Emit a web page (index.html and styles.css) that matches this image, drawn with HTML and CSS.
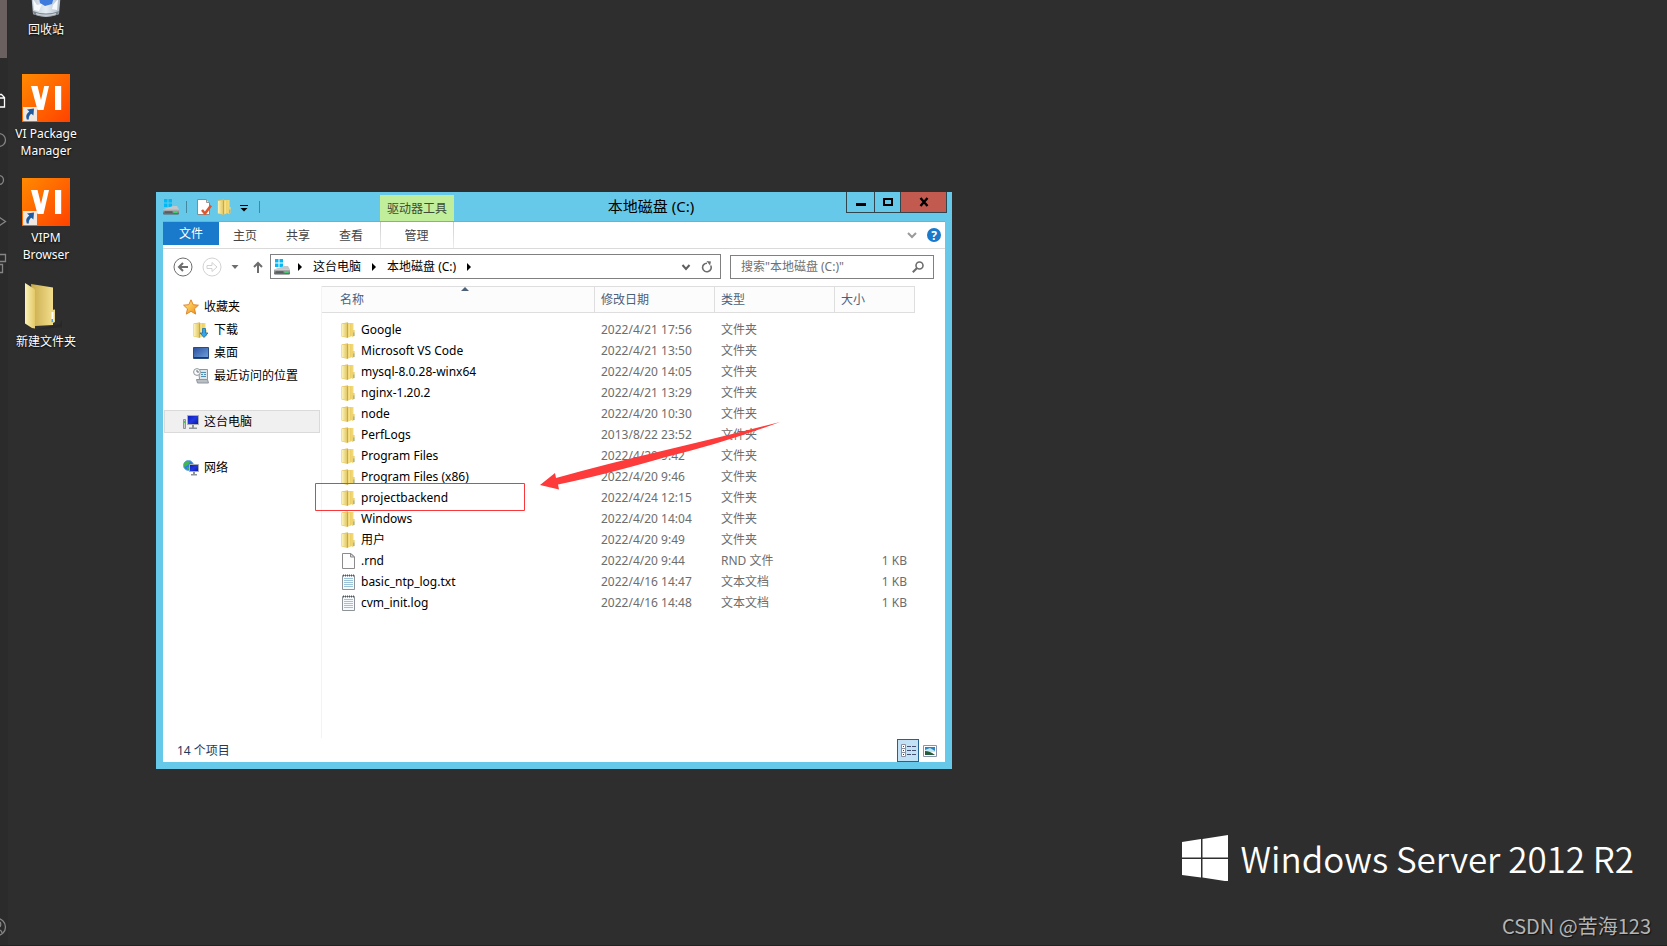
FILE: index.html
```html
<!DOCTYPE html>
<html lang="zh-CN">
<head>
<meta charset="utf-8">
<title>本地磁盘 (C:)</title>
<link rel="stylesheet" href="styles.css">
</head>
<body>
<svg class="defs" aria-hidden="true">
  <defs>
    <linearGradient id="gFolder" x1="0" x2="1"><stop offset="0" stop-color="#e9c65a"/><stop offset="1" stop-color="#f4dc7c"/></linearGradient>
    <linearGradient id="gPale" x1="0" x2="1"><stop offset="0" stop-color="#fbf3b8"/><stop offset="1" stop-color="#e2c766"/></linearGradient>
    <linearGradient id="gBack" x1="0" x2="1"><stop offset="0" stop-color="#c7aa4b"/><stop offset="1" stop-color="#f3de8c"/></linearGradient>
    <linearGradient id="gVi" x1="0" y1="0" x2="1" y2="1"><stop offset="0" stop-color="#ff8a00"/><stop offset="1" stop-color="#ff4200"/></linearGradient>
    <linearGradient id="gScreen" x1="0" y1="0" x2="1" y2="1"><stop offset="0" stop-color="#2b4f9c"/><stop offset="1" stop-color="#6fa4e0"/></linearGradient>
    <linearGradient id="gPc" x1="0" y1="0" x2="1" y2="1"><stop offset="0" stop-color="#0a1bb0"/><stop offset=".5" stop-color="#2238e0"/><stop offset="1" stop-color="#0713a0"/></linearGradient>
    <linearGradient id="gStar" x1="0" y1="0" x2="1" y2="1"><stop offset="0" stop-color="#fff08a"/><stop offset="1" stop-color="#f08a10"/></linearGradient>
    <linearGradient id="gMetal" x1="0" y1="0" x2="0" y2="1"><stop offset="0" stop-color="#b9bdc0"/><stop offset="1" stop-color="#55595c"/></linearGradient>
    <linearGradient id="gBin" x1="0" x2="1"><stop offset="0" stop-color="#b9c4cf"/><stop offset=".5" stop-color="#e6edf5"/><stop offset="1" stop-color="#a9b5c2"/></linearGradient>
    <symbol id="drive" viewBox="0 0 16 16">
      <path fill="#00b9f5" d="M1 0h3.500v3.500H1zM5.500 0H9v3.500H5.500zM1 4.500h3.500V8H1zM5.500 4.500H9V8H5.500z"/>
      <path fill="#c4c7c9" d="M2.500 9.500 10 7h4l2 3.500H0z"/>
      <path fill="url(#gMetal)" d="M0 10.500h16v4q0 1-1 1H1q-1 0-1-1z"/>
      <path fill="#35393b" d="M1.500 12.500h8v1h-8z"/><path fill="#3fd06a" d="M10.500 12h4v2h-4z"/>
    </symbol>
    <symbol id="folder" viewBox="0 0 16 16">
      <path fill="#e3bd55" d="M1.500 1.500 8 .3V16l-6.500-1.500z"/>
      <path fill="url(#gPale)" d="M2 2l5-.8v14L2 14.300z"/>
      <path fill="#cfa445" d="M7 1.500h1v14l-1-.3z"/>
      <path fill="url(#gFolder)" d="M8 1h5.500v12.500L8 15.500z"/>
      <path fill="#f8ea9e" d="M8.500 1.500h1.200v13l-1.200.4z"/>
      <path fill="#edd274" d="M12 8h2.700v6L12 15z"/><path fill="#5fb2e8" d="M13.300 10.500h1v3.500h-1z"/>
    </symbol>
    <symbol id="file" viewBox="-1 0 16 16"><path fill="#fdfdfd" stroke="#8b8b8b" d="M1.500.5h8.500l3.500 3.500v11.500h-12z"/><path fill="#ddd" stroke="#8b8b8b" d="M9.500.5V4h4z"/></symbol>
    <symbol id="text" viewBox="-1 0 16 16">
      <path fill="#f6fafc" stroke="#8d9396" d="M1.500 1.500h12v14h-12z"/>
      <path stroke="#555" stroke-dasharray="1 1" stroke-width="2" d="M2 1.500h11"/>
      <path stroke="#9cc3d8" d="M3 4.500h9M3 6.500h9M3 8.500h9M3 10.500h9M3 12.500h9"/>
    </symbol>
    <symbol id="vi" viewBox="0 0 48 48">
      <path fill="url(#gVi)" d="M0 0h48v48H0z"/>
      <path fill="#fff" d="M9 12h6.500l3.500 14 3.200-14H27l-5.500 24h-6zM33 12h6.200v24H33z"/>
      <path fill="#f1e6e0" d="M1 33h14v14H1z"/>
      <path fill="#1d5a9e" d="M5 35.500 12 34.500l-.6 7-2-1.800q-3 2-2.600 5.800h-2q-2-5 2.500-8z"/>
    </symbol>
  </defs>
</svg>

<main class="desktop">
  <aside class="edge" aria-hidden="true">
    <svg class="edge-icons" viewBox="0 0 8 300" fill="none" stroke="#858585" stroke-width="1.300">
      <path fill="#6a6060" stroke="none" d="M0 0h7v58H0z"/>
      <path stroke="#fff" d="M0 94.500h1.500l3 3v9.500H0M0 98h4"/>
      <circle cx="-1" cy="140" r="6.500"/><circle cx="-1" cy="180" r="4.500"/>
      <path d="M-2 216.500 5.500 221.500-2 226.500M0 254.500h5.500v7H0M0 264.500h2.500v8H0"/>
    </svg>
    <svg class="edge-user" viewBox="0 0 8 20" fill="none" stroke="#858585" stroke-width="1.300"><circle cx="-3" cy="10" r="8.500"/><path d="M0 5q1.500 2 0 5M0 13q2 1 2 3"/></svg>
  </aside>

  <nav class="icons" aria-label="桌面图标">
    <a class="shortcut" href="#">
      <svg viewBox="0 0 48 48"><path fill="url(#gBin)" d="M8 10h32l-3 34q-13 6-26 0z"/><path fill="#3f7bdc" d="m17 28 5-2 6 2 4-1-2 7-7 2-5-3z"/><path fill="#f6f9fc" d="m11 29 4 6 5-1-3 7-5-1zM31 35l5-6-1 11-5-1z"/><path fill="#7d858c" d="M11 41q13 5 26 0l-.5 3.500q-12 4-25 0z"/><path fill="#c9d0d6" d="M14 43q10 3 20 0v1.500q-10 3-20 0z"/></svg>
      <span>回收站</span>
    </a>
    <a class="shortcut" href="#"><svg><use href="#vi"/></svg><span>VI Package Manager</span></a>
    <a class="shortcut" href="#"><svg><use href="#vi"/></svg><span>VIPM Browser</span></a>
    <a class="shortcut" href="#">
      <svg viewBox="0 0 48 48"><path fill="#222" opacity=".5" d="m12 48 26-6 2-4v7z"/><path fill="url(#gBack)" d="M9 2 31 5.500V43l-18 1z"/><path fill="url(#gPale)" d="M3 1 12.500 7q1 1 .5 3v36.500L10 46 3 41.500z"/><path fill="#ead780" d="m29 28 4-.5V40l-4 2z"/><path fill="#fff" d="M29.500 30h2v9h-2z"/><path fill="#4aa3ec" d="M29.500 37h1.500v3h-1.500z"/></svg>
      <span>新建文件夹</span>
    </a>
  </nav>

  <section class="window" aria-label="本地磁盘 (C:)">
    <header class="titlebar">
      <div class="quick">
        <svg class="i16"><use href="#drive"/></svg>
        <i class="bar"></i>
        <button aria-label="属性"><svg class="i16" viewBox="0 0 16 16"><path fill="#fff" stroke="#8b8b8b" d="M1.500.5h9l3 3v12h-12z"/><path fill="#ddd" stroke="#999" d="M10.500.5v3h3"/><path fill="none" stroke="#e2552b" stroke-width="2.600" d="m6 11 3 3.500 6-8"/></svg></button>
        <button aria-label="新建文件夹"><svg class="i16"><use href="#folder"/></svg></button>
        <button aria-label="自定义快速访问工具栏"><svg class="i16" viewBox="0 0 16 16"><path stroke="#000" d="M4 6.500h8"/><path d="M4.500 9h7L8 12.500z"/></svg></button>
        <i class="bar"></i>
      </div>
      <span class="context">驱动器工具</span>
      <h1>本地磁盘 (C:)</h1>
      <div class="controls">
        <button class="min" aria-label="最小化"><svg viewBox="0 0 12 12"><path d="M1 7h10v3H1z"/></svg></button>
        <button class="max" aria-label="最大化"><svg viewBox="0 0 12 12"><path fill="none" stroke="#000" stroke-width="2" d="M2 3h8v6H2z"/></svg></button>
        <button class="close" aria-label="关闭"><svg viewBox="0 0 12 12"><path fill="none" stroke="#000" stroke-width="2.400" d="m2.500 2 7 8m0-8-7 8"/></svg></button>
      </div>
    </header>

    <div class="client">
      <div class="ribbon">
        <button class="tab-file">文件</button>
        <button class="tab">主页</button>
        <button class="tab">共享</button>
        <button class="tab">查看</button>
        <button class="tab tab-manage">管理</button>
        <div class="ribbon-end">
          <button aria-label="展开功能区"><svg class="i16" viewBox="0 0 16 16"><path fill="none" stroke="#9a9a9a" stroke-width="2" d="m4 6 4 4 4-4"/></svg></button>
          <button class="help" aria-label="帮助">?</button>
        </div>
      </div>

      <div class="address-row">
        <button aria-label="后退"><svg class="i20" viewBox="0 0 20 20" fill="none" stroke="#6d6d6d"><circle cx="10" cy="10" r="9"/><path stroke-width="2" d="M15 10H6m4-4-4 4 4 4"/></svg></button>
        <button aria-label="前进"><svg class="i20" viewBox="0 0 20 20" fill="none" stroke="#d2d2d2"><circle cx="10" cy="10" r="9"/><path d="M5 8.500h5V5.500l5 4.500-5 4.500v-3H5z"/></svg></button>
        <button aria-label="最近浏览的位置"><svg class="i8" viewBox="0 0 8 8"><path fill="#6d6d6d" d="M.5 2h7L4 6z"/></svg></button>
        <button class="up" aria-label="向上"><svg class="i12" viewBox="0 0 12 12"><path fill="none" stroke="#6d6d6d" stroke-width="2" d="M6 12V2M2 6l4-4 4 4"/></svg></button>
        <div class="address">
          <svg class="i16"><use href="#drive"/></svg>
          <svg class="i8" viewBox="0 0 8 8"><path d="M2 0v8l4-4z"/></svg>
          <a href="#">这台电脑</a>
          <svg class="i8" viewBox="0 0 8 8"><path d="M2 0v8l4-4z"/></svg>
          <a href="#">本地磁盘 (C:)</a>
          <svg class="i8" viewBox="0 0 8 8"><path d="M2 0v8l4-4z"/></svg>
          <button class="history" aria-label="以前的位置"><svg class="i12" viewBox="0 0 12 12"><path fill="none" stroke="#5f5f5f" stroke-width="2" d="m2.500 4 3.500 4 3.500-4"/></svg></button>
          <button aria-label="刷新"><svg class="i12" viewBox="0 0 12 12"><path fill="none" stroke="#6d6d6d" stroke-width="1.600" d="M9.700 4.500A4.300 4.300 0 1 1 6 2.200"/><path fill="#6d6d6d" d="M5.500 0 10 .5 9 4.500z"/></svg></button>
        </div>
        <label class="search">
          <input type="search" aria-label="搜索" placeholder='搜索"本地磁盘 (C:)"'>
          <svg class="i12" viewBox="0 0 12 12" fill="none" stroke="#6d6d6d"><circle cx="7.500" cy="4.500" r="3.500" stroke-width="1.600"/><path stroke-width="2" d="M5 7 .8 11.200"/></svg>
        </label>
      </div>

      <div class="body">
        <nav class="tree" aria-label="导航窗格">
          <a href="#"><svg class="i16" viewBox="0 0 16 16"><path fill="url(#gStar)" stroke="#dd8628" d="m8 .8 2.200 4.900 5.200.5-3.900 3.600 1.200 5.300L8 12.300l-4.700 2.800 1.200-5.300L.6 6.200l5.200-.5z"/></svg>收藏夹</a>
          <a class="child" href="#"><svg class="i16" viewBox="0 0 16 16"><use href="#folder" x="-1" width="16" height="16"/><path fill="#34a5ea" stroke="#1470b4" stroke-width=".8" d="M9.500 6.500h3V11H15l-4 4.500L7 11h2.500z"/></svg>下载</a>
          <a class="child" href="#"><svg class="i16" viewBox="0 0 16 16"><path fill="url(#gScreen)" stroke="#2c4c80" d="M.5 2.500h15v11H.5z"/><path stroke="#173a6c" d="M1 12.500h14"/></svg>桌面</a>
          <a class="child" href="#"><svg class="i16" viewBox="0 0 16 16"><path fill="#dfe4e7" stroke="#8d979d" d="M5.500 1.500h9v10h-8z"/><path fill="#b9bfc3" stroke="#8d979d" d="M3.500 11.500h11l1 3.500h-11z"/><path stroke="#4f8fb3" d="M8 4.500h5M8 6.500h2M11 6.500h2M8 8.500h5"/><circle cx="4" cy="4" r="3.400" fill="#f9fbfc" stroke="#8d979d"/><path fill="none" stroke="#617077" d="M4 2v2h2"/></svg>最近访问的位置</a>
          <a class="group current" href="#"><svg class="i16" viewBox="0 0 16 16"><path fill="#c9ccce" stroke="#8d9396" d="M.5 5.500h2v9h-2z"/><path fill="#50c060" d="M1 7h1v2H1z"/><path fill="url(#gPc)" stroke="#a9aeb1" d="M4.500 1.500h11v9h-11z"/><path fill="#8d9396" d="M9 11h2v2.500h3V15H6v-1.500h3z"/></svg>这台电脑</a>
          <a class="group" href="#"><svg class="i16" viewBox="0 0 16 16"><circle cx="5.500" cy="5.500" r="5" fill="#2c80d8" stroke="#6faade"/><path fill="#42b84b" d="M2 2q3-2 5 0L5 5 1.500 7Q0 4 2 2zM4 7l3 1-2 2z"/><path fill="url(#gPc)" stroke="#a9aeb1" d="M6.500 4.500h9v7h-9z"/><path fill="#8d9396" d="M10 12h2v2h2v1.500H8V14h2z"/></svg>网络</a>
        </nav>

        <div class="files">
          <table>
            <colgroup><col class="c-name"><col class="c-mid"><col class="c-mid"><col class="c-size"></colgroup>
            <thead><tr><th class="sorted">名称</th><th>修改日期</th><th>类型</th><th>大小</th></tr></thead>
            <tbody>
              <tr><td><svg class="i16"><use href="#folder"/></svg>Google</td><td>2022/4/21 17:56</td><td>文件夹</td><td></td></tr>
              <tr><td><svg class="i16"><use href="#folder"/></svg>Microsoft VS Code</td><td>2022/4/21 13:50</td><td>文件夹</td><td></td></tr>
              <tr><td><svg class="i16"><use href="#folder"/></svg>mysql-8.0.28-winx64</td><td>2022/4/20 14:05</td><td>文件夹</td><td></td></tr>
              <tr><td><svg class="i16"><use href="#folder"/></svg>nginx-1.20.2</td><td>2022/4/21 13:29</td><td>文件夹</td><td></td></tr>
              <tr><td><svg class="i16"><use href="#folder"/></svg>node</td><td>2022/4/20 10:30</td><td>文件夹</td><td></td></tr>
              <tr><td><svg class="i16"><use href="#folder"/></svg>PerfLogs</td><td>2013/8/22 23:52</td><td>文件夹</td><td></td></tr>
              <tr><td><svg class="i16"><use href="#folder"/></svg>Program Files</td><td>2022/4/20 9:42</td><td>文件夹</td><td></td></tr>
              <tr><td><svg class="i16"><use href="#folder"/></svg>Program Files (x86)</td><td>2022/4/20 9:46</td><td>文件夹</td><td></td></tr>
              <tr><td><svg class="i16"><use href="#folder"/></svg>projectbackend</td><td>2022/4/24 12:15</td><td>文件夹</td><td></td></tr>
              <tr><td><svg class="i16"><use href="#folder"/></svg>Windows</td><td>2022/4/20 14:04</td><td>文件夹</td><td></td></tr>
              <tr><td><svg class="i16"><use href="#folder"/></svg>用户</td><td>2022/4/20 9:49</td><td>文件夹</td><td></td></tr>
              <tr><td><svg class="i16"><use href="#file"/></svg>.rnd</td><td>2022/4/20 9:44</td><td>RND 文件</td><td>1 KB</td></tr>
              <tr><td><svg class="i16"><use href="#text"/></svg>basic_ntp_log.txt</td><td>2022/4/16 14:47</td><td>文本文档</td><td>1 KB</td></tr>
              <tr><td><svg class="i16"><use href="#text"/></svg>cvm_init.log</td><td>2022/4/16 14:48</td><td>文本文档</td><td>1 KB</td></tr>
            </tbody>
          </table>
        </div>
      </div>

      <footer class="status">
        <span>14 个项目</span>
        <button class="view active" aria-label="详细信息"><svg class="i16" viewBox="0 0 16 16"><path fill="#fff" stroke="#8d8da0" d="M1.500 1.500h4v4h-4zM1.500 5.500h4v4h-4zM1.500 9.500h4v4h-4z"/><path stroke="#1d6a2e" d="M3 3.500h1"/><path stroke="#b01515" d="M3 7.500h1"/><path stroke="#1b3f8c" d="M3 11.500h1"/><path stroke="#44506e" d="M7 3.500h4M12 3.500h4M7 7.500h4M12 7.500h4M7 11.500h4M12 11.500h4"/></svg></button>
        <button class="view" aria-label="大图标"><svg class="i16" viewBox="0 0 16 16"><path fill="#fff" stroke="#8a93ad" d="M1.500 2.500h13v11h-13z"/><path fill="#2b86c8" d="M3 4h10v4H3z"/><path fill="#bfe6f2" d="m3 7 5-2 5 3v1H3z"/><path fill="#245c3c" d="M3 8q5 0 10 4H3z"/></svg></button>
      </footer>
    </div>
  </section>

  <svg class="note" viewBox="0 0 466 92" aria-hidden="true">
    <path fill="none" stroke="#f8383a" d="M1.500 62.500h209v27h-209z"/>
    <path fill="#fd3b3b" d="M226 64 241 52l1 5q50-14 110-28T466 1Q410 22 352 36 290 54 244 63.500l1 5z"/>
  </svg>

  <div class="brand">
    <svg viewBox="0 0 46 46"><path fill="#fff" d="M0 7 19 4v18.500H0zM20.500 4 46 0v22.500H20.500zM0 24h19v18.500L0 40zM20.500 24H46v22.500l-25.500-4z"/></svg>
    <span>Windows Server 2012 R2</span>
  </div>
  <p class="credit">CSDN @苦海123</p>
</main>
</body>
</html>
```

FILE: styles.css
```css
* { box-sizing: border-box; }

body {
  margin: 0;
  background: #2e2e2e;
  color: #000;
  font: 12px/17px "Noto Sans", "Noto Sans CJK SC", sans-serif;
}

button {
  display: flex;
  align-items: center;
  justify-content: center;
  padding: 0;
  border: 0;
  background: none;
  color: inherit;
  font: inherit;
}

a { color: inherit; text-decoration: none; }
svg { display: block; flex: none; }

.defs { position: absolute; width: 0; height: 0; }
.i8 { width: 8px; height: 8px; }
.i12 { width: 12px; height: 12px; }
.i16 { width: 16px; height: 16px; }
.i20 { width: 20px; height: 20px; }

.desktop {
  position: relative;
  display: flex;
  min-height: 100vh;
  overflow: hidden;
  border-bottom: 1px solid #222;
}

.edge {
  display: flex;
  flex-direction: column;
  justify-content: space-between;
  width: 8px;
  padding-bottom: 8px;
  background: #2b2b2b;
}
.edge-icons { width: 8px; height: 300px; }
.edge-user { width: 8px; height: 20px; }

.icons {
  display: flex;
  flex-direction: column;
  width: 76px;
  margin-top: -30px;
}
.shortcut {
  display: flex;
  flex-direction: column;
  align-items: center;
  gap: 3px;
  height: 104px;
  color: #fff;
  text-align: center;
  text-shadow: 0 1px 2px #000;
}
.shortcut svg { width: 48px; height: 48px; }

/* Explorer window */
.window {
  position: absolute;
  inset: 192px 715px 176px 156px;
  display: flex;
  flex-direction: column;
  min-width: 780px;
  padding: 0 7px 7px;
  background: #66c9ea;
}

.titlebar {
  position: relative;
  display: flex;
  height: 30px;
  border-bottom: 1px solid #6fb0cd;
}
.quick {
  display: flex;
  align-items: center;
  gap: 7px;
  width: 217px;
}
.quick .bar { width: 1px; height: 12px; margin-right: 2px; background: #4687a0; }
.quick button + button { margin-left: -3px; }
.context {
  align-self: flex-end;
  width: 74px;
  padding: 5px 0 4px;
  background: #c0ee9b;
  color: #3d4a38;
  text-align: center;
}
h1 {
  flex: 1;
  margin: 0;
  padding-left: 2px;
  font-size: 15px;
  font-weight: 400;
  line-height: 29px;
  text-align: center;
}
.controls { display: flex; height: 21px; margin-right: -2px; }
.controls button {
  border: 1px solid #30454e;
  border-width: 0 0 1px 1px;
}
.controls .min { width: 28px; }
.controls .max { width: 26px; }
.controls .close { width: 47px; border-right-width: 1px; background: #c35a50; }
.controls svg { width: 12px; height: 12px; }

.client {
  display: flex;
  flex: 1;
  flex-direction: column;
  background: #fff;
}

.ribbon {
  display: flex;
  height: 27px;
  border-bottom: 1px solid #dadada;
  color: #444;
}
.tab-file { width: 56px; height: 23px; background: #1979ca; color: #fff; }
.tab { width: 53px; padding-right: 1px; }
.tab-manage {
  width: 74px;
  margin-left: 2px;
  border: solid;
  border-width: 0 1px;
  border-image: linear-gradient(#ccc, #eee) 1;
}
.ribbon-end {
  display: flex;
  align-items: center;
  gap: 7px;
  margin-left: auto;
  padding-right: 4px;
}
.help {
  width: 14px;
  height: 14px;
  border-radius: 50%;
  background: #1979ca;
  color: #fff;
  font-weight: 700;
}

.address-row {
  display: flex;
  align-items: center;
  gap: 9px;
  padding: 5px 11px 7px 10px;
}
.address-row .up { margin: 0 -3px 0 4px; }
.address {
  display: flex;
  flex: 1;
  align-items: center;
  gap: 9px;
  height: 25px;
  padding: 0 7px 0 3px;
  border: 1px solid #808080;
}
.address .i16 { margin-right: -3px; }
.address .history { margin-left: auto; }
.search {
  display: flex;
  flex: 0 0 204px;
  align-items: center;
  min-width: 0;
  height: 24px;
  padding: 0 9px 0 10px;
  border: 1px solid #808080;
}
.search input {
  flex: 1;
  min-width: 0;
  padding: 0;
  border: 0;
  outline: 0;
  background: none;
  font: inherit;
}
.search input::placeholder { color: #707070; opacity: 1; }

.body { display: flex; flex: 1; }

.tree {
  width: 159px;
  padding: 9px 1px 0;
  border-right: 1px solid #f3f3f3;
}
.tree a {
  display: flex;
  align-items: center;
  gap: 5px;
  height: 23px;
  padding-left: 18px;
  border: 1px solid transparent;
}
.tree .child { padding-left: 28px; }
.tree .group { margin-top: 23px; }
.tree .current { border-color: #dadada; background: #f0f0f0; }

.files { flex: 1; }
table { width: 593px; border-spacing: 0; table-layout: fixed; }
.c-name { width: 273px; }
.c-mid { width: 120px; }
.c-size { width: 80px; }
th {
  height: 27px;
  padding: 0 6px;
  border: solid #dedede;
  border-width: 1px 1px 1px 0;
  background: #fcfcfc;
  color: #4c607a;
  font-weight: 400;
  text-align: left;
}
.sorted { position: relative; padding-left: 18px; }
.sorted::after {
  content: "";
  position: absolute;
  top: 0;
  left: 51%;
  border: 4px solid transparent;
  border-top: 0;
  border-bottom-color: #4c607a;
}
tbody::before { content: ""; display: block; height: 6px; }
td { height: 21px; padding: 0 8px 0 6px; color: #6d6d6d; white-space: nowrap; }
td:first-child {
  display: flex;
  align-items: center;
  gap: 5px;
  padding-left: 18px;
  color: #000;
}
td:last-child { text-align: right; }

.status {
  display: flex;
  align-items: center;
  height: 24px;
  padding: 1px 4px 0 14px;
  color: #1e395b;
}
.status span { flex: 1; }
.view { width: 22px; height: 23px; border: 1px solid transparent; }
.view.active { border-color: #26628f; background: #c3e2f5; }

/* Marker drawn over the file list */
.note {
  position: absolute;
  top: 421px;
  left: 314px;
  width: 466px;
  height: 92px;
  pointer-events: none;
}

/* Wallpaper branding */
.brand {
  position: absolute;
  right: 33px;
  bottom: 64px;
  display: flex;
  align-items: center;
  gap: 13px;
  color: #fff;
  font: 350 35px/42px "Noto Sans CJK SC", "Noto Sans", sans-serif;
}
.brand svg { width: 46px; height: 46px; }
.credit {
  position: absolute;
  right: 16px;
  bottom: 7px;
  margin: 0;
  color: #b4b4b4;
  font: 20px/24px "Noto Sans CJK SC", sans-serif;
  text-shadow: 1px 1px 1px #111;
}
```
